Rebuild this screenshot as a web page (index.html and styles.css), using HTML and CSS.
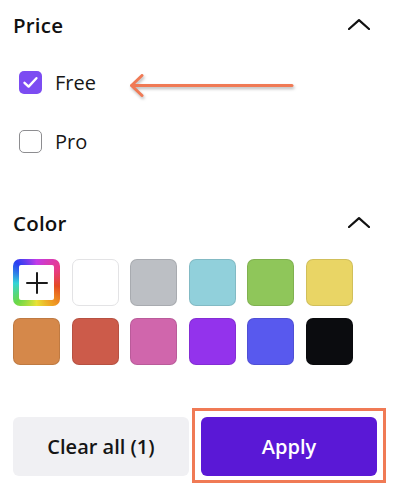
FILE: index.html
```html
<!DOCTYPE html>
<html lang="en">
<head>
<meta charset="utf-8">
<link rel="stylesheet" href="styles.css">
</head>
<body>
<div class="panel">
  <section class="group">
    <header class="group-head">
      <h2 class="group-title">Price</h2>
      <svg class="chevron" viewBox="0 0 22 11" width="22" height="11"><polyline points="1,10 11,1.2 21,10" fill="none" stroke="#111" stroke-width="2.2" stroke-linecap="round" stroke-linejoin="round"/></svg>
    </header>
    <ul class="options">
      <li class="option">
        <span class="box box-checked"><svg viewBox="0 0 23 23" width="23" height="23"><polyline points="5.5,11.8 9.6,15.6 17.4,7.2" fill="none" stroke="#fff" stroke-width="2.4" stroke-linecap="round" stroke-linejoin="round"/></svg></span>
        <span class="option-label">Free</span>
        <svg class="pointer" viewBox="0 0 180 32" width="180" height="32"><g fill="none" stroke="#f07a55" stroke-width="3" stroke-linecap="round" stroke-linejoin="round"><line x1="7" y1="14.5" x2="167" y2="14.5"/><polyline points="17,4.5 6.5,14.5 17,24.5"/></g></svg>
      </li>
      <li class="option">
        <span class="box"></span>
        <span class="option-label">Pro</span>
      </li>
    </ul>
  </section>

  <section class="group group-color">
    <header class="group-head">
      <h2 class="group-title">Color</h2>
      <svg class="chevron" viewBox="0 0 22 11" width="22" height="11"><polyline points="1,10 11,1.2 21,10" fill="none" stroke="#111" stroke-width="2.2" stroke-linecap="round" stroke-linejoin="round"/></svg>
    </header>
    <div class="swatches">
      <button class="swatch swatch-custom"><span class="custom-inner"><svg viewBox="0 0 22 22" width="22" height="22"><path d="M11 1v20M1 11h20" stroke="#1a1a1a" stroke-width="2" stroke-linecap="round"/></svg></span></button>
      <button class="swatch swatch-white"></button>
      <button class="swatch swatch-gray"></button>
      <button class="swatch swatch-cyan"></button>
      <button class="swatch swatch-green"></button>
      <button class="swatch swatch-yellow"></button>
      <button class="swatch swatch-orange"></button>
      <button class="swatch swatch-red"></button>
      <button class="swatch swatch-pink"></button>
      <button class="swatch swatch-purple"></button>
      <button class="swatch swatch-blue"></button>
      <button class="swatch swatch-black"></button>
    </div>
  </section>

  <div class="actions">
    <button class="btn btn-clear">Clear all (1)</button>
    <div class="apply-wrap">
      <button class="btn btn-apply">Apply</button>
      <span class="highlight"></span>
    </div>
  </div>
</div>
</body>
</html>
```

FILE: styles.css
```css
* { box-sizing: border-box; }
html, body { margin: 0; padding: 0; background: #fff; }
body {
  width: 396px;
  height: 487px;
  overflow: hidden;
  font-family: "Open Sans", "Liberation Sans", sans-serif;
  color: #111;
}
.panel { padding: 13px 13px 0 13px; }

.group-head {
  display: flex;
  align-items: center;
  justify-content: space-between;
  height: 24px;
  padding-right: 13px;
}
.group-title {
  margin: 0;
  font-size: 20.5px;
  line-height: 24px;
  font-weight: 600;
  letter-spacing: 0.2px;
}
.chevron { display: block; margin-top: -2px; }

.options {
  list-style: none;
  margin: 34px 0 0 0;
  padding: 0;
  display: flex;
  flex-direction: column;
  gap: 36px;
}
.option {
  position: relative;
  display: flex;
  align-items: center;
  height: 23px;
  padding-left: 6px;
}
.box {
  width: 23px;
  height: 23px;
  border-radius: 5px;
  border: 1.5px solid #8d8d90;
  background: #fff;
  flex: none;
}
.box svg { display: block; }
.box-checked {
  border: none;
  background: #7c4cf2;
}
.option-label {
  margin-left: 13px;
  font-size: 20px;
  line-height: 23px;
  font-weight: 400;
  color: #161616;
}
.pointer {
  position: absolute;
  left: 112px;
  top: 0;
  filter: drop-shadow(1px 2px 1.5px rgba(0,0,0,0.28));
}

.group-color { margin-top: 58px; }
.swatches {
  margin-top: 24px;
  display: grid;
  grid-template-columns: repeat(6, 47px);
  column-gap: 11.6px;
  row-gap: 12px;
}
.swatch {
  width: 47px;
  height: 47px;
  padding: 0;
  border-radius: 7px;
  border: 1px solid rgba(0,0,0,0.1);
  display: block;
}
.swatch-custom {
  border: none;
  padding: 6px;
  background: conic-gradient(from 0deg, #c23ce8, #e83a8c 55deg, #e44a22 100deg, #ef9a22 140deg, #e8e236 180deg, #6ad848 225deg, #34d4d8 268deg, #2a3ef2 315deg, #c23ce8 360deg);
}
.custom-inner {
  display: flex;
  align-items: center;
  justify-content: center;
  width: 35px;
  height: 35px;
  background: #fff;
  border-radius: 2px;
}
.custom-inner svg { display: block; }
.swatch-white { background: #fff; border: 1.5px solid #e3e3e5; }
.swatch-gray { background: #bcbfc4; }
.swatch-cyan { background: #91d0db; }
.swatch-green { background: #8fc65a; }
.swatch-yellow { background: #e9d565; }
.swatch-orange { background: #d5884a; }
.swatch-red { background: #cc5b4a; }
.swatch-pink { background: #d066ac; }
.swatch-purple { background: #9333ec; }
.swatch-blue { background: #5859ee; }
.swatch-black { background: #0b0c0f; }

.actions {
  margin-top: 52px;
  margin-right: 6px;
  display: grid;
  grid-template-columns: 1fr 1fr;
  column-gap: 12px;
}
.btn {
  height: 59px;
  padding: 0;
  border: none;
  border-radius: 6px;
  font-family: "Open Sans", "Liberation Sans", sans-serif;
  font-size: 20px;
  font-weight: 600;
  cursor: pointer;
}
.btn-clear {
  background: #f0f0f3;
  color: #151515;
}
.apply-wrap {
  position: relative;
  display: flex;
}
.btn-apply {
  flex: 1;
  background: #5a18d6;
  color: #fff;
}
.highlight {
  position: absolute;
  left: -9px;
  right: -9px;
  top: -9px;
  bottom: -7px;
  border: 3px solid #f07a55;
  pointer-events: none;
}
```
